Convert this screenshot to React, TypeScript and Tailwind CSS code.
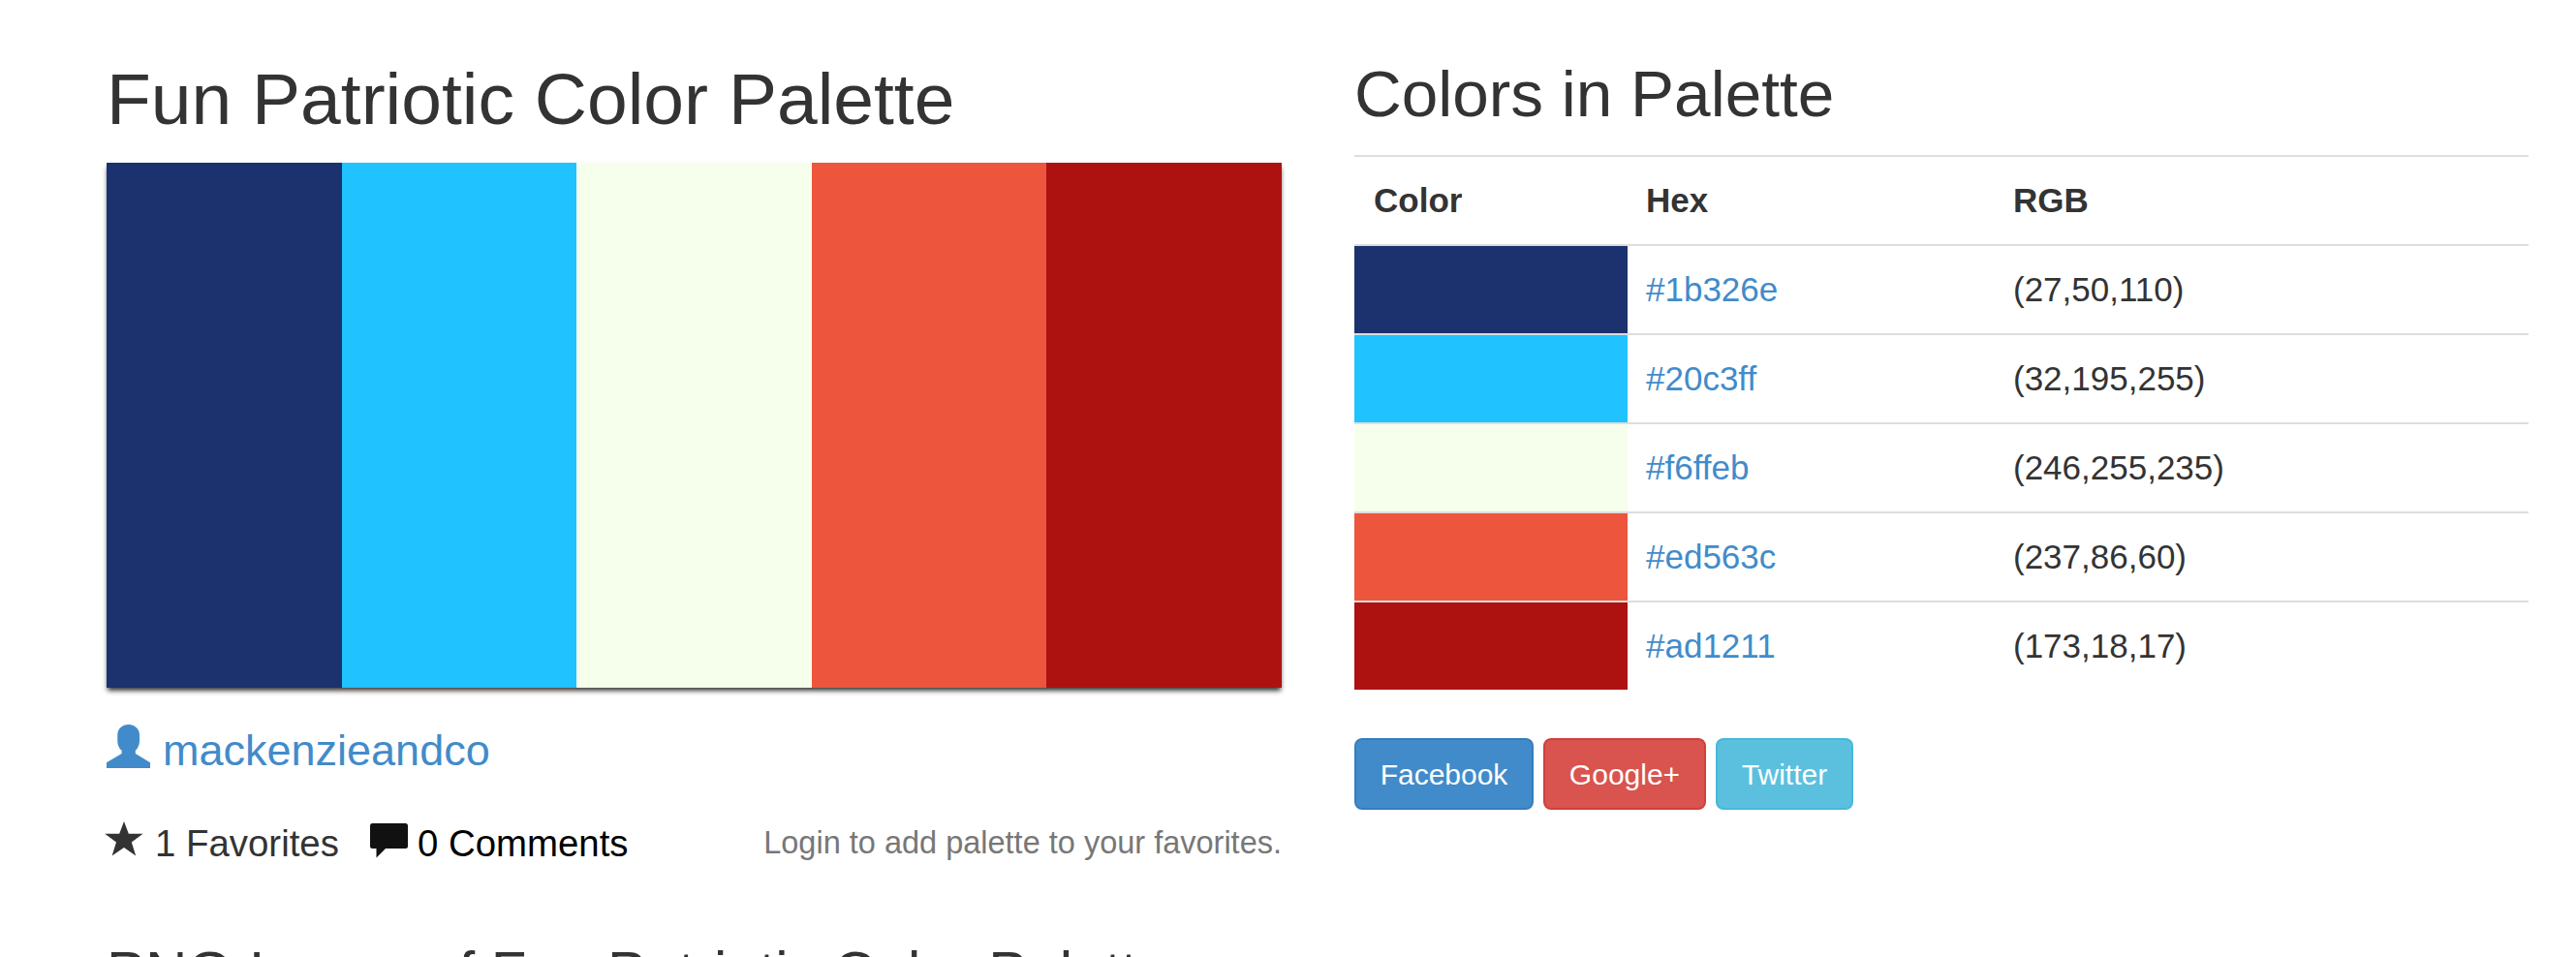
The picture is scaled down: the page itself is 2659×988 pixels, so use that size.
const colors = [
  { hex: "#1b326e", rgb: "(27,50,110)", bg: "bg-[#1b326e]" },
  { hex: "#20c3ff", rgb: "(32,195,255)", bg: "bg-[#20c3ff]" },
  { hex: "#f6ffeb", rgb: "(246,255,235)", bg: "bg-[#f6ffeb]" },
  { hex: "#ed563c", rgb: "(237,86,60)", bg: "bg-[#ed563c]" },
  { hex: "#ad1211", rgb: "(173,18,17)", bg: "bg-[#ad1211]" },
];

const shares = [
  { label: "Facebook", style: "w-[185px] border-[#357ebd] bg-[#428bca]" },
  { label: "Google+", style: "w-[168px] border-[#d43f3a] bg-[#d9534f]" },
  { label: "Twitter", style: "w-[142px] border-[#46b8da] bg-[#5bc0de]" },
];

function UserIcon() {
  return (
    <svg className="mt-[5px] h-[45px] w-[45px] shrink-0" viewBox="0 0 45 45" fill="currentColor">
      <path d="M0 45V39.3L15.6 30V26.6Q14.6 26.4 13.4 24.6Q11.3 21.5 11.3 17.5V10.5C11.3 4.4 16.4 0 22.6 0S34 4.4 34 10.5V17.5Q34 21.5 31.8 24.6Q30.8 26.4 29.8 26.6V30L45 39.3V45Z" />
    </svg>
  );
}

function StarIcon() {
  return (
    <svg className="-ml-[2px] mt-[5px] h-[36px] w-[40px] shrink-0" viewBox="0 0 40 36" fill="currentColor">
      <path d="M20 0L24.8 12.8H39.6L27.8 21.6L32.2 35.4L20 27L7.6 35.4L12 21.6L0.2 12.8H15.2Z" />
    </svg>
  );
}

function CommentIcon() {
  return (
    <svg className="mt-[7px] h-[36px] w-[40px] shrink-0" viewBox="0 0 40 36" fill="currentColor">
      <path d="M2.5 0H36.5Q39 0 39 2.5V23.5Q39 26 36.5 26H16L6.5 35.5V26H2.5Q0 26 0 23.5V2.5Q0 0 2.5 0Z" />
    </svg>
  );
}

export default function App() {
  return (
    <main className="flex h-[988px] w-[2659px] overflow-hidden bg-white pl-[110px] font-['Liberation_Sans',Arial,sans-serif] text-[35px] leading-[50px] text-[#333]">
      <section className="w-[1213px] shrink-0">
        <h1 className="mt-[61px] h-[107px] text-[75px] leading-[82px] whitespace-nowrap">Fun Patriotic Color Palette</h1>
        <div className="flex h-[542px] shadow-[0_4px_5px_-1px_rgba(0,0,0,0.8)]">
          {colors.map((c) => (
            <div key={c.hex} className={`flex-1 ${c.bg}`} />
          ))}
        </div>
        <a className="mt-[33px] flex h-[64px] gap-[13px] text-[#428bca]">
          <UserIcon />
          <span className="mt-[7px] text-[45px]">mackenzieandco</span>
        </a>
        <div className="mt-[36px] flex h-[60px] whitespace-nowrap">
          <StarIcon />
          <span className="ml-[12px] mt-[3px] text-[38.4px]">1 Favorites</span>
          <span className="ml-[32px] flex text-[#111]">
            <CommentIcon />
            <span className="ml-[9px] mt-[3px] text-[38.4px] text-black">0 Comments</span>
          </span>
          <span className="ml-auto mt-[2px] text-[32.5px] text-[#777]">Login to add palette to your favorites.</span>
        </div>
        <h2 className="mt-[68px] text-[60px] leading-[66px] whitespace-nowrap">PNG Image of Fun Patriotic Color Palette</h2>
      </section>
      <section className="ml-[75px] w-[1212px] shrink-0">
        <h2 className="mt-[59px] h-[101px] text-[67.5px] leading-[76px] whitespace-nowrap">Colors in Palette</h2>
        <div className="grid h-[92px] grid-cols-[282px_378px_1fr] items-center border-t-2 border-[#ddd] font-bold">
          <span className="pl-[20px]">Color</span>
          <span className="pl-[19px]">Hex</span>
          <span className="pl-[20px]">RGB</span>
        </div>
        {colors.map((c) => (
          <div key={c.hex} className="grid h-[92px] grid-cols-[282px_378px_1fr] items-center border-t-2 border-[#ddd]">
            <span className={`h-full ${c.bg}`} />
            <a className="pl-[19px] text-[#428bca]">{c.hex}</a>
            <span className="pl-[20px]">{c.rgb}</span>
          </div>
        ))}
        <div className="mt-[50px] flex gap-[10px]">
          {shares.map((s) => (
            <button key={s.label} className={`h-[74px] rounded-[8px] border-2 text-[30px] leading-[45px] text-white ${s.style}`}>
              {s.label}
            </button>
          ))}
        </div>
      </section>
    </main>
  );
}
